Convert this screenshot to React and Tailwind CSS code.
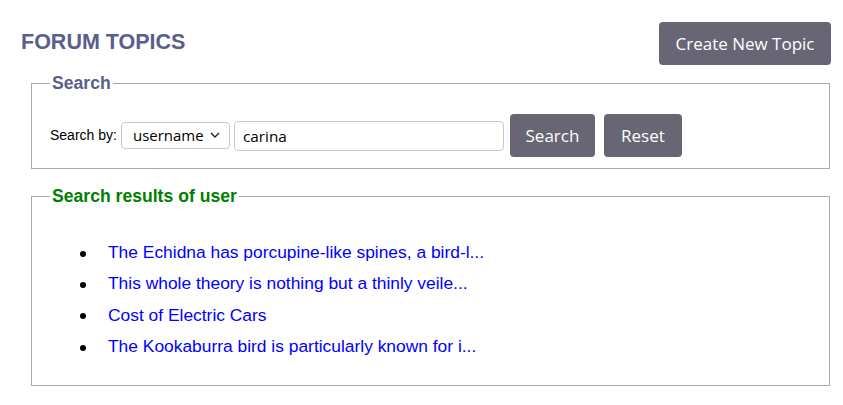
import React, { useState } from "react";

const topics = [
	"The Echidna has porcupine-like spines, a bird-l...",
	"This whole theory is nothing but a thinly veile...",
	"Cost of Electric Cars",
	"The Kookaburra bird is particularly known for i...",
];

const App = () => {
	const [field, setField] = useState("username");
	const [query, setQuery] = useState("carina");

	return (
		<div className="min-h-screen bg-white pl-[21px] pr-[12px] pt-[22px] font-['Liberation_Sans',Arial,sans-serif]">
			<div className="flex items-start justify-between">
				<h1 className="mt-[6px] text-[21.5px] font-bold leading-[28px] text-[#5a5e8c]">
					FORUM TOPICS
				</h1>
				<button className="h-[43px] w-[172px] rounded-[4px] bg-[#686675] font-['Open_Sans',sans-serif] text-[17px] text-white">
					Create New Topic
				</button>
			</div>

			<fieldset className="ml-[10px] mr-[1px] mt-[9px] border border-[#a9a9a9] pb-[11px] pl-[18px] pr-[18px] pt-[22px]">
				<legend className="px-[2px] text-[17.6px] font-bold leading-[18px] text-[#5a5e8c]">
					Search
				</legend>
				<div className="flex items-center">
					<span className="mr-[4px] text-[14px] text-black">Search by:</span>
					<div className="relative">
						<select
							value={field}
							onChange={(e) => setField(e.target.value)}
							className="h-[27px] w-[109px] appearance-none rounded-[4px] border border-[#c8c8c8] bg-white pl-[11px] font-['Open_Sans',sans-serif] text-[15px] text-black"
						>
							<option value="username">username</option>
							<option value="title">title</option>
						</select>
						<svg
							className="pointer-events-none absolute right-[10px] top-[10px]"
							width="10"
							height="6"
							viewBox="0 0 10 6"
							fill="none"
						>
							<path d="M1 1l4 4 4-4" stroke="#222" strokeWidth="1.4" />
						</svg>
					</div>
					<input
						value={query}
						onChange={(e) => setQuery(e.target.value)}
						className="ml-[4px] h-[30px] w-[270px] rounded-[4px] border border-[#c8c8c8] px-[8px] font-['Open_Sans',sans-serif] text-[15.3px] text-black outline-none"
					/>
					<button className="ml-[6px] h-[43px] w-[85px] rounded-[4px] bg-[#686675] font-['Open_Sans',sans-serif] text-[17px] text-white">
						Search
					</button>
					<button className="ml-[9px] h-[43px] w-[78px] rounded-[4px] bg-[#686675] font-['Open_Sans',sans-serif] text-[17px] text-white">
						Reset
					</button>
				</div>
			</fieldset>

			<fieldset className="ml-[10px] mr-[1px] mt-[18px] border border-[#a9a9a9] pb-[23px] pl-[18px] pr-[18px] pt-[32px]">
				<legend className="px-[2px] text-[17.6px] font-bold leading-[18px] text-[#008000]">
					Search results of user
				</legend>
				<ul className="pl-[30px]">
					{topics.map((t) => (
						<li key={t} className="flex items-center text-[17.4px] leading-[31.3px]">
							<span className="mr-[22px] mt-[2px] h-[6px] w-[6px] shrink-0 rounded-full bg-black" />
							<a href="#" className="text-[#0000ff]">
								{t}
							</a>
						</li>
					))}
				</ul>
			</fieldset>
		</div>
	);
};

export default App;
